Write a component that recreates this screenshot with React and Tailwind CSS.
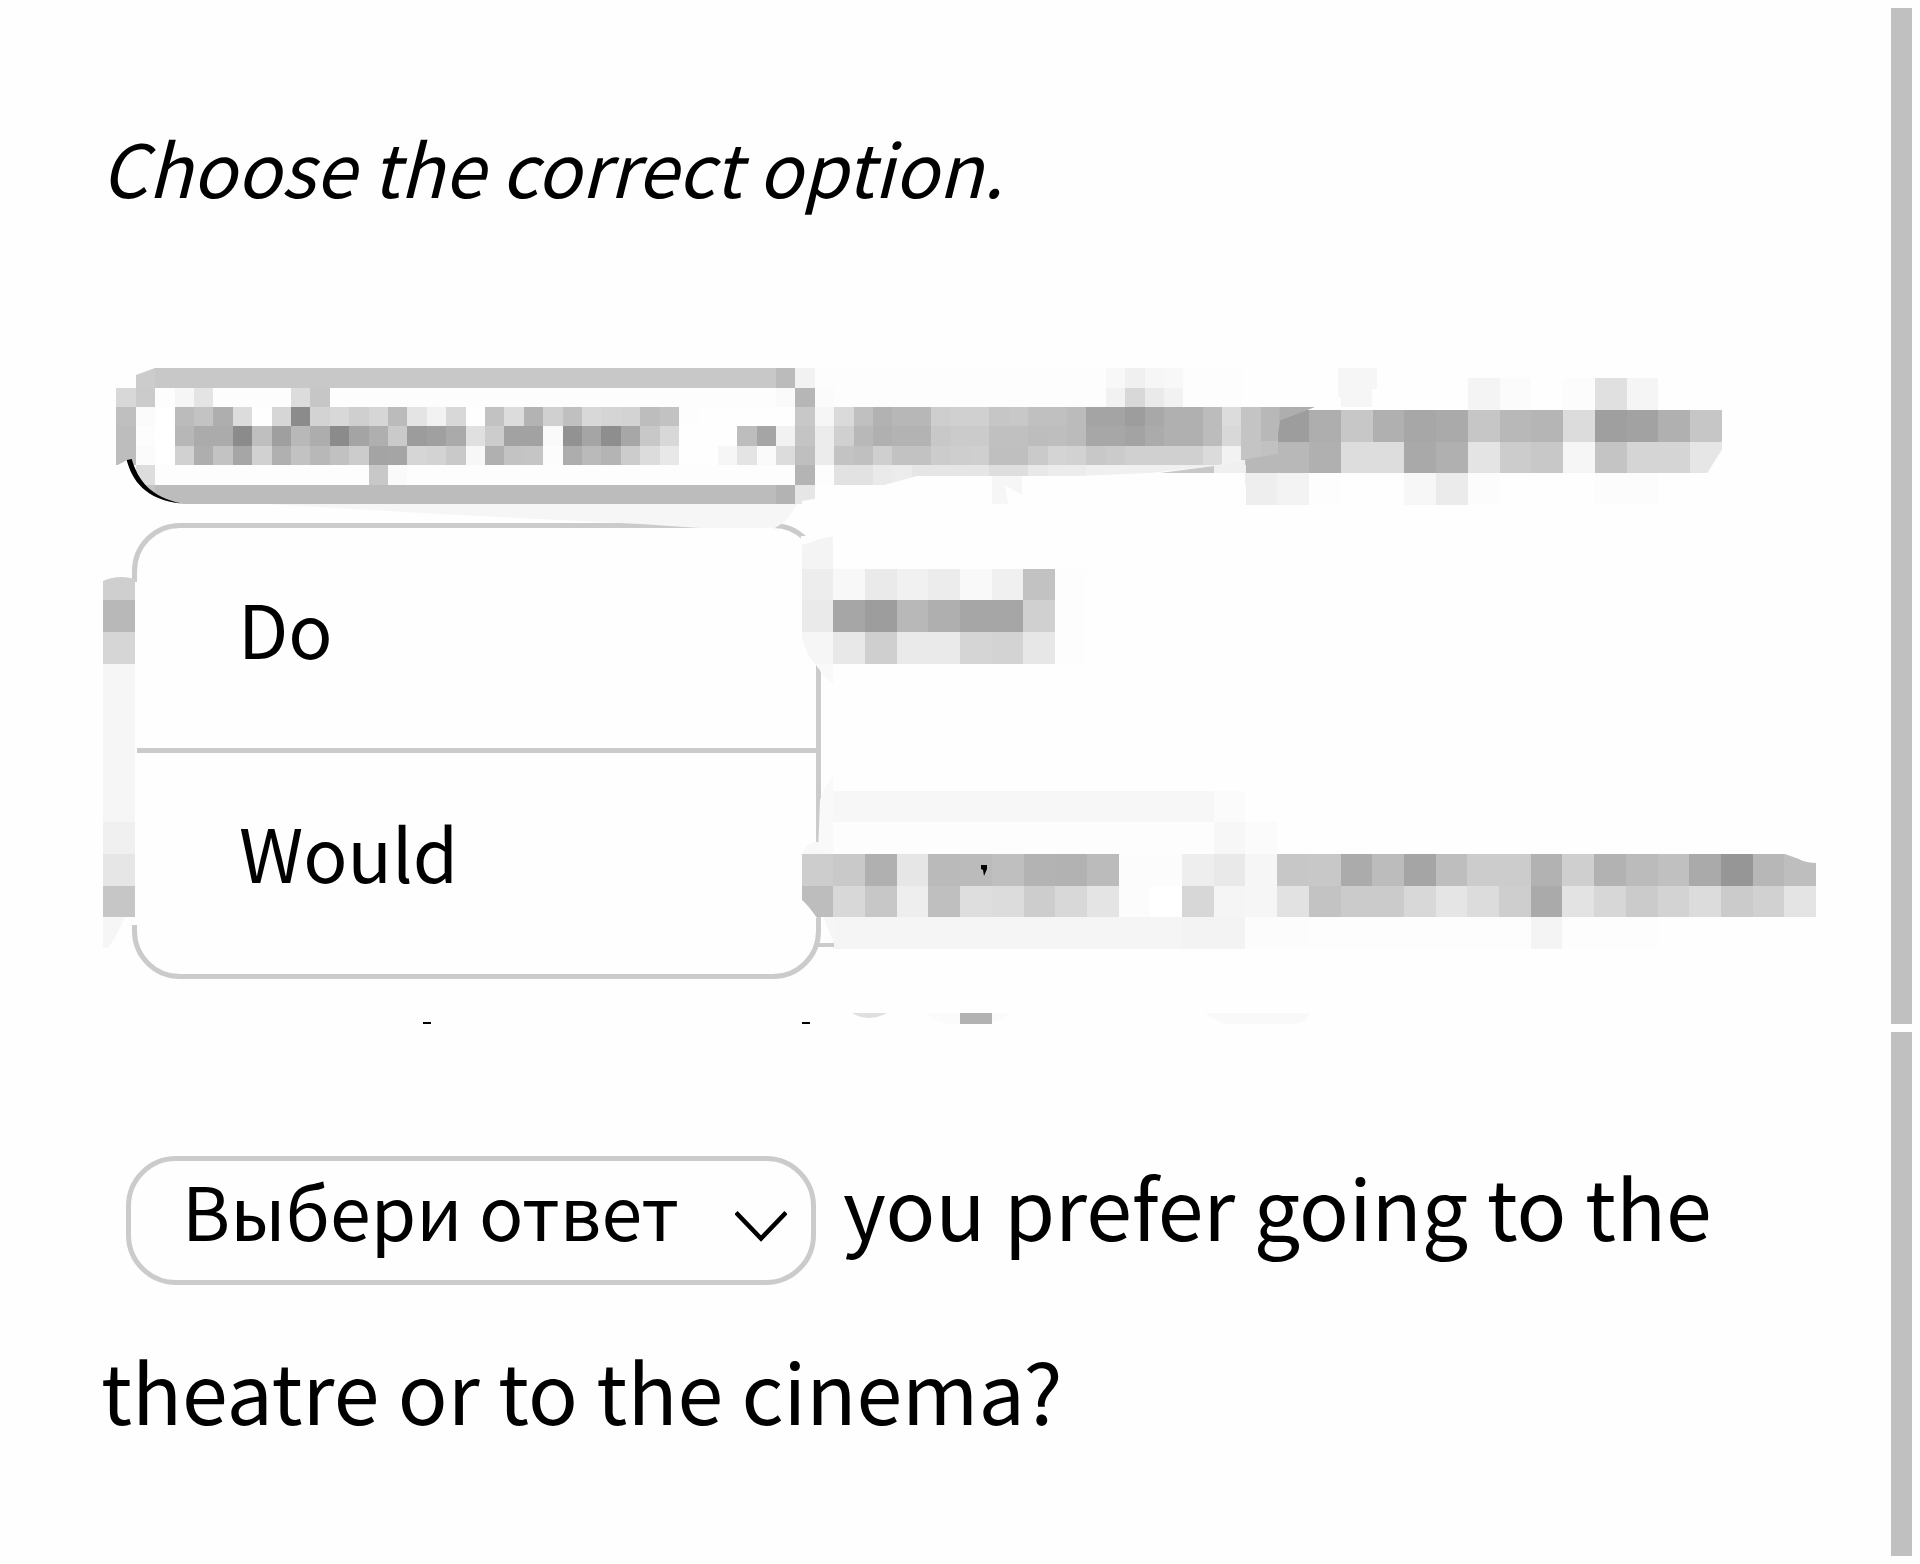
const FONT = "font-['Noto_Sans_CJK_SC','Source_Sans_3','Noto_Sans',sans-serif]";

// Each token is a grey level in hex, "--" leaves the cell empty, "xx*n" repeats it.
const expand = (row) =>
  row.split(' ').flatMap((token) => {
    const [shade, times] = token.split('*');
    return Array(Number(times || 1)).fill(shade);
  });

const Mosaic = ({ x, y, w, h = w, rows }) => (
  <g shapeRendering="crispEdges">
    {rows.map((row, r) =>
      expand(row).map((shade, c) => {
        if (shade === '--') return null;
        const x1 = Math.round(x + c * w);
        const y1 = Math.round(y + r * h);
        return (
          <rect
            key={`${r}-${c}`}
            x={x1}
            y={y1}
            width={Math.round(x + (c + 1) * w) - x1}
            height={Math.round(y + (r + 1) * h) - y1}
            fill={`#${shade}${shade}${shade}`}
          />
        );
      })
    )}
  </g>
);

const firstLine = [
  '-- cc c8*32 bb f2 fd*15 f8 f0 f6 f8 fd*3',
  'd8 cb fd f6 e4 fd*4 dc c6 fd*23 fa b6 fb fd*14 f2 d8 ea f2 fd*3',
  'bf fb ff bb c3 ae dc fe d6 8b d3 d8 cf d6 bb e4 f2 d8 fe c2 dc b3 d0 c0 d8 d5 d3 bd c2 fd fe*5 c8 f6 da c0 b2 b7 b7 ce d0 d0 c6 c8 c0 c0 bb a4 a4 9d a8 b0 b0 bc dc c2 b8',
  'bd fd ff b7 ab ab 8b bf 9f b8 ad 8b a4 af ca 9c a0 aa e0 cc a2 a2 fa 92 a5 8e a7 c8 d8 fe*3 bd a5 f2 c4 ec d0 b8 b0 b3 b3 c8 cb cb c0 c0 bd be bb a7 a7 a3 ab b0 b0 bc d8 c2 b7',
  'bd fb ff d1 ae c3 a6 d1 b0 c2 b8 c1 cc a4 a5 d6 d3 c9 f7 b0 c3 c5 fc ad ba b4 cc dc e8 fe*2 f6 e4 fa dc bf ec c3 c0 cf c2 c2 cc ce cf bf bf ca d4 d2 c8 cb d0*4 db f2 c2 b8',
  '-- dd fd*11 c8 fa fd*20 b4 fd e2 e2 ea ec e6*4 de de e8 ec ec f0*9',
  '-- c4 bc*32 b3 e6',
];

const firstLineEnd = [
  '-- -- -- -- -- -- -- f4 fb -- fc e0 f5',
  '-- 9d ae c7 b0 a7 aa c6 b8 b5 dc 9f a2 b0 c6',
  'b8 b8 b0 dd dd a9 b0 e4 cc c8 f6 c4 d5 d5 e6',
  'ee f3 fd fe -- f7 eb fc -- -- -- fc fc',
];

const secondLine = [
  'f4',
  'ed f8 ea f1 ec f9 f0 c2 fd',
  'ea a6 9d b8 af a6 a6 d0 fd',
  'f6 e8 cf ea ea d5 d3 e7 fd',
];

const thirdLine = [
  '-- f7*12 fb',
  '-- fd*12 f7 fb',
  'cd c9 b0 e6 ba bb bf b3 b2 bb fc fc ee e9 f6 c7 c8 ab bc a5 be cc cc b2 cf b2 bb c0 aa 96 b7 be',
  'bd d8 c7 ee bf de dc cd d8 e4 fc ff d7 f5 f6 e2 c3 cb cb d8 e5 dc ce aa e3 d7 cb d3 dc cb d1 e4',
  '-- f5*11 f3 f3 fc fc fd*7 f4 fd*3',
];

const Redaction = () => (
  <svg viewBox="0 340 1880 684" className="relative z-10 block h-[684px] w-[1880px]">
    {/* light wash below the censored select */}
    <path d="M250 503 L440 514 L560 520 L640 524 L700 528 L775 528 Q790 520 797 503Z" fill="#f6f6f6" />

    <Mosaic x={116.4} y={368.3} w={19.4} h={19.37} rows={firstLine} />
    <path d="M136 368H155L136 375Z" fill="#fefefe" />
    <path d="M114 467L127 460C132 480 145 500 182 503.5V506H114Z" fill="#fefefe" />
    <path d="M126.7 460C132 480 145 500 182 503.5C150 497 138 480 131.7 459Z" fill="#000" />
    <path d="M802 505V501Q840 495 884 485L917 476H1080L1150 473L1214 466L1245 460V506H802Z" fill="#fefefe" />
    <path d="M1160 473L1214 466V473Z" fill="#c8c8c8" />
    <path d="M1214 466L1245 460V473H1214Z" fill="#f0f0f0" />
    <path d="M992 476H1022V495L1005 485L1008 504H992Z" fill="#f6f6f6" />

    <Mosaic x={1245.5} y={378} w={31.75} rows={firstLineEnd} />
    <path d="M1241 426H1278V454L1241 460Z" fill="#c1c1c1" />
    <path d="M1261 426H1278L1277 441H1261Z" fill="#b8b8b8" />
    <path d="M1241 407H1261V456L1241 460Z" fill="#c4c4c4" />
    <path d="M1261 407H1280V421L1277 441H1261Z" fill="#b8b8b8" />
    <path d="M1280 407H1315L1279 421Z" fill="#aeaeae" />
    <path d="M1338 368H1377V389H1372V407H1341V398L1338 397Z" fill="#f6f6f6" />
    <path d="M1723 448V475H1706Z" fill="#fefefe" />

    {/* strip left of the menu */}
    <g shapeRendering="crispEdges">
      <path d="M131 582h6v343h-6z" fill="#fefefe" />
      <path d="M103 664h32v158h-32z" fill="#f6f6f6" />
      <path d="M103 600h32v32h-32z" fill="#b8b8b8" />
      <path d="M103 632h32v32h-32z" fill="#d6d6d6" />
      <path d="M103 822h32v32h-32z" fill="#f0f0f0" />
      <path d="M103 854h32v32h-32z" fill="#e6e6e6" />
      <path d="M103 886h32v31h-32z" fill="#c6c6c6" />
    </g>
    <path d="M103 600V581Q118 574 135 579V600Z" fill="#cfcfcf" />
    <path d="M103 917H125Q118 934 108 948H103Z" fill="#f6f6f6" />

    {/* smudges over the right edge of the menu */}
    <path d="M808 541L833 538V682L818 668L802 640V542Z" fill="#fefefe" />
    <Mosaic x={801.6} y={537} w={31.65} rows={secondLine} />
    <path d="M801 536H833Q818 539 809 543L801 545Z" fill="#fefefe" />
    <path d="M801 634Q806 656 816 665H801Z" fill="#fefefe" />
    <path d="M818 664H833V684L821 673Z" fill="#f9f9f9" />

    <path d="M814 842H834V856H802Q803 846 814 842Z" fill="#f8f8f8" />
    <path d="M820 800Q825 783 833 778V854H818Z" fill="#f9f9f9" />
    <Mosaic x={801.6} y={790.5} w={31.7} rows={thirdLine} />
    <path d="M801 899Q808 905 817 918H801Z" fill="#fefefe" />
    <path d="M824 917H834V942Q828 932 824 917Z" fill="#f6f6f6" />
    <path d="M1782 853H1818V863Q1805 863 1799 859Z" fill="#fefefe" />
    <path d="M818 943h16v4h-17z" fill="#cbcbcb" />
    <path d="M981 865h6v4l-3 7-1-6-2-1z" fill="#000" />

    {/* tops of the next line */}
    <path d="M852 1013H887Q869 1023 852 1013Z" fill="#e0e0e0" />
    <path d="M925 1013H1010Q1000 1022 985 1024H950Q935 1022 925 1013Z" fill="#fbfbfb" />
    <path d="M960 1013h32v11h-32z" fill="#b2b2b2" />
    <path d="M1205 1013H1310Q1306 1024 1290 1024H1228Q1214 1021 1205 1013Z" fill="#f9f9f9" />
    <path d="M423 1022h8v2h-8zM802 1022h8v2h-8z" fill="#000" />
  </svg>
);

const OptionsMenu = () => (
  <ul className="absolute top-[183px] left-[132px] h-[456px] w-[689px] rounded-[48px] border-[5px] border-[#cbcbcb] text-[73.2px]">
    <li className="flex h-[225px] items-center border-b-[5px] border-[#cbcbcb] pl-[101px] leading-[100px]">
      <span className="pb-[23px]">Do</span>
    </li>
    <li className="flex h-[221px] items-center pl-[102px] leading-[100px]">
      <span className="pb-[26px]">Would</span>
    </li>
  </ul>
);

const AnswerSelect = () => (
  <button className="flex h-[129px] w-[690px] items-center justify-between rounded-[50px] border-[5px] border-[#cbcbcb] pr-[24px] pl-[51px] text-[73.4px]">
    <span className="pb-[22px] leading-[99px] whitespace-nowrap">Выбери ответ</span>
    <svg viewBox="0 0 52 32" className="mt-[10px] h-8 w-[52px]" fill="none" stroke="#000" strokeWidth="4.5">
      <path d="M1 2.5L26 28.5L51 2.5" />
    </svg>
  </button>
);

export default function App() {
  return (
    <div className={`flex h-[1564px] w-[1920px] flex-col overflow-hidden bg-[#fefefe] text-black ${FONT}`}>
      <section className="flex h-[1024px]">
        <div className="flex w-[1891px] flex-col justify-between pt-[116px]">
          <h1 className="pl-[101px] text-[73.2px] leading-[100px] italic">Choose the correct option.</h1>
          <div className="relative">
            <OptionsMenu />
            <Redaction />
          </div>
        </div>
        <div className="mt-2 w-[21px] bg-[#c0c0c0]" />
      </section>
      <section className="flex h-[540px] pt-2">
        <div className="w-[1891px] pt-[124px] text-[82.4px] leading-[129px]">
          <div className="flex items-start pl-[126px]">
            <AnswerSelect />
            <span className="-mt-[15px] pl-[27px] whitespace-nowrap">you prefer going to the</span>
          </div>
          <p className="pt-[40px] pl-[101px]">theatre or to the cinema?</p>
        </div>
        <div className="h-[524px] w-[21px] bg-[#c0c0c0]" />
      </section>
    </div>
  );
}
